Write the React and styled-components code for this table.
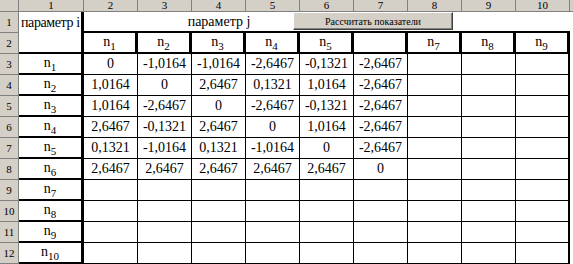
import styled, { createGlobalStyle } from "styled-components";

// ===================== data ===============================
const values = [
    ["0", "-1,0164", "-1,0164", "-2,6467", "-0,1321", "-2,6467"],
    ["1,0164", "0", "2,6467", "0,1321", "1,0164", "-2,6467"],
    ["1,0164", "-2,6467", "0", "-2,6467", "-0,1321", "-2,6467"],
    ["2,6467", "-0,1321", "2,6467", "0", "1,0164", "-2,6467"],
    ["0,1321", "-1,0164", "0,1321", "-1,0164", "0", "-2,6467"],
    ["2,6467", "2,6467", "2,6467", "2,6467", "2,6467", "0"],
];

const headerJ = [1, 2, 3, 4, 5, null, 7, 8, 9];
const columns = [1, 2, 3, 4, 5, 6, 7, 8, 9, 10];

const GlobalStyle = createGlobalStyle`
    body {
        margin: 0;
        background: #fff;
    }
`;

// ================= componentes ============================

function Param({ i }) {
    return (
        <Label>
            n<Sub>{i}</Sub>
        </Label>
    );
}

export default function App() {
    const body = [];

    // linha 1
    body.push(<RowHead key="h1">1</RowHead>);
    body.push(<Cell key="1-1" $r={3} $align="flex-start" $tight>параметр i</Cell>);
    body.push(<Cell key="1-2" $span={5} $b={2}>параметр j</Cell>);
    for (let c = 7; c <= 10; c++) body.push(<Cell key={`1-${c}`} $b={2} />);
    body.push(<Cell key="1-11" />);

    // linha 2
    body.push(<RowHead key="h2">2</RowHead>);
    body.push(<Cell key="2-1" $r={3} $b={2} />);
    headerJ.forEach((n, i) => {
        body.push(
            <Cell key={`2-${i}`} $r={3} $b={2}>
                {n && <Param i={n} />}
            </Cell>
        );
    });
    body.push(<Cell key="2-11" />);

    // linhas 3..12
    for (let r = 3; r <= 12; r++) {
        const dados = values[r - 3] || [];
        body.push(<RowHead key={`h${r}`}>{r}</RowHead>);
        body.push(
            <Cell key={`${r}-1`} $r={3} $b={2}>
                <Param i={r - 2} />
            </Cell>
        );
        for (let c = 0; c < 9; c++) {
            body.push(
                <Cell key={`${r}-${c}`} $r={c === 8 ? 2 : 1} $b={1}>
                    {dados[c]}
                </Cell>
            );
        }
        body.push(<Cell key={`${r}-11`} />);
    }

    return (
        <>
            <GlobalStyle />
            <Sheet>
                <Grid>
                    <Corner />
                    {columns.map((c) => (
                        <ColHead key={c}>{c}</ColHead>
                    ))}
                    <ColHead />
                    {body}
                </Grid>
                <CalcButton>Рассчитать показатели</CalcButton>
            </Sheet>
        </>
    );
}

// ===================== styles =============================

const Sheet = styled.div`
    position: relative;
    width: 573px;
    height: 264px;
    overflow: hidden;
`;

const Grid = styled.div`
    display: grid;
    grid-template-columns: 19px 65px repeat(9, 54px) 1fr;
    grid-template-rows: 12px repeat(12, 21px);
`;

const headBase = `
    box-sizing: border-box;
    background: #d4d0c8;
    border-right: 1px solid #808080;
    border-bottom: 1px solid #808080;
    display: flex;
    align-items: center;
    justify-content: center;
    font: 11px "Liberation Serif", "Times New Roman", serif;
    color: #000;
`;

const Corner = styled.div`
    ${headBase}
`;

const ColHead = styled.div`
    ${headBase}
    line-height: 11px;
`;

const RowHead = styled.div`
    ${headBase}
`;

const Cell = styled.div`
    box-sizing: border-box;
    grid-column: span ${(p) => p.$span || 1};
    display: flex;
    align-items: center;
    justify-content: ${(p) => p.$align || "center"};
    padding: ${(p) => (p.$tight ? "0 0 0 2px" : "0 2px")};
    background: #fff;
    border-right: ${(p) => p.$r || 0}px solid #000;
    border-bottom: ${(p) => p.$b || 0}px solid #000;
    font: 14px "Liberation Serif", "Times New Roman", serif;
    letter-spacing: ${(p) => (p.$tight ? "-0.4px" : "0")};
    color: #000;
    white-space: nowrap;
    overflow: hidden;
`;

const Label = styled.span`
    display: inline-block;
    padding-bottom: 2px;
`;

const Sub = styled.span`
    position: relative;
    top: 4px;
    font-size: 11px;
`;

const CalcButton = styled.div`
    position: absolute;
    left: 293px;
    top: 12px;
    width: 160px;
    height: 18px;
    box-sizing: border-box;
    background: #d4d0c8;
    border-top: 1px solid #fff;
    border-left: 1px solid #fff;
    border-right: 1px solid #404040;
    border-bottom: 1px solid #404040;
    box-shadow: inset -1px -1px 0 #808080;
    display: flex;
    align-items: center;
    justify-content: center;
    font: 10px "Liberation Serif", "Times New Roman", serif;
    color: #000;
`;
